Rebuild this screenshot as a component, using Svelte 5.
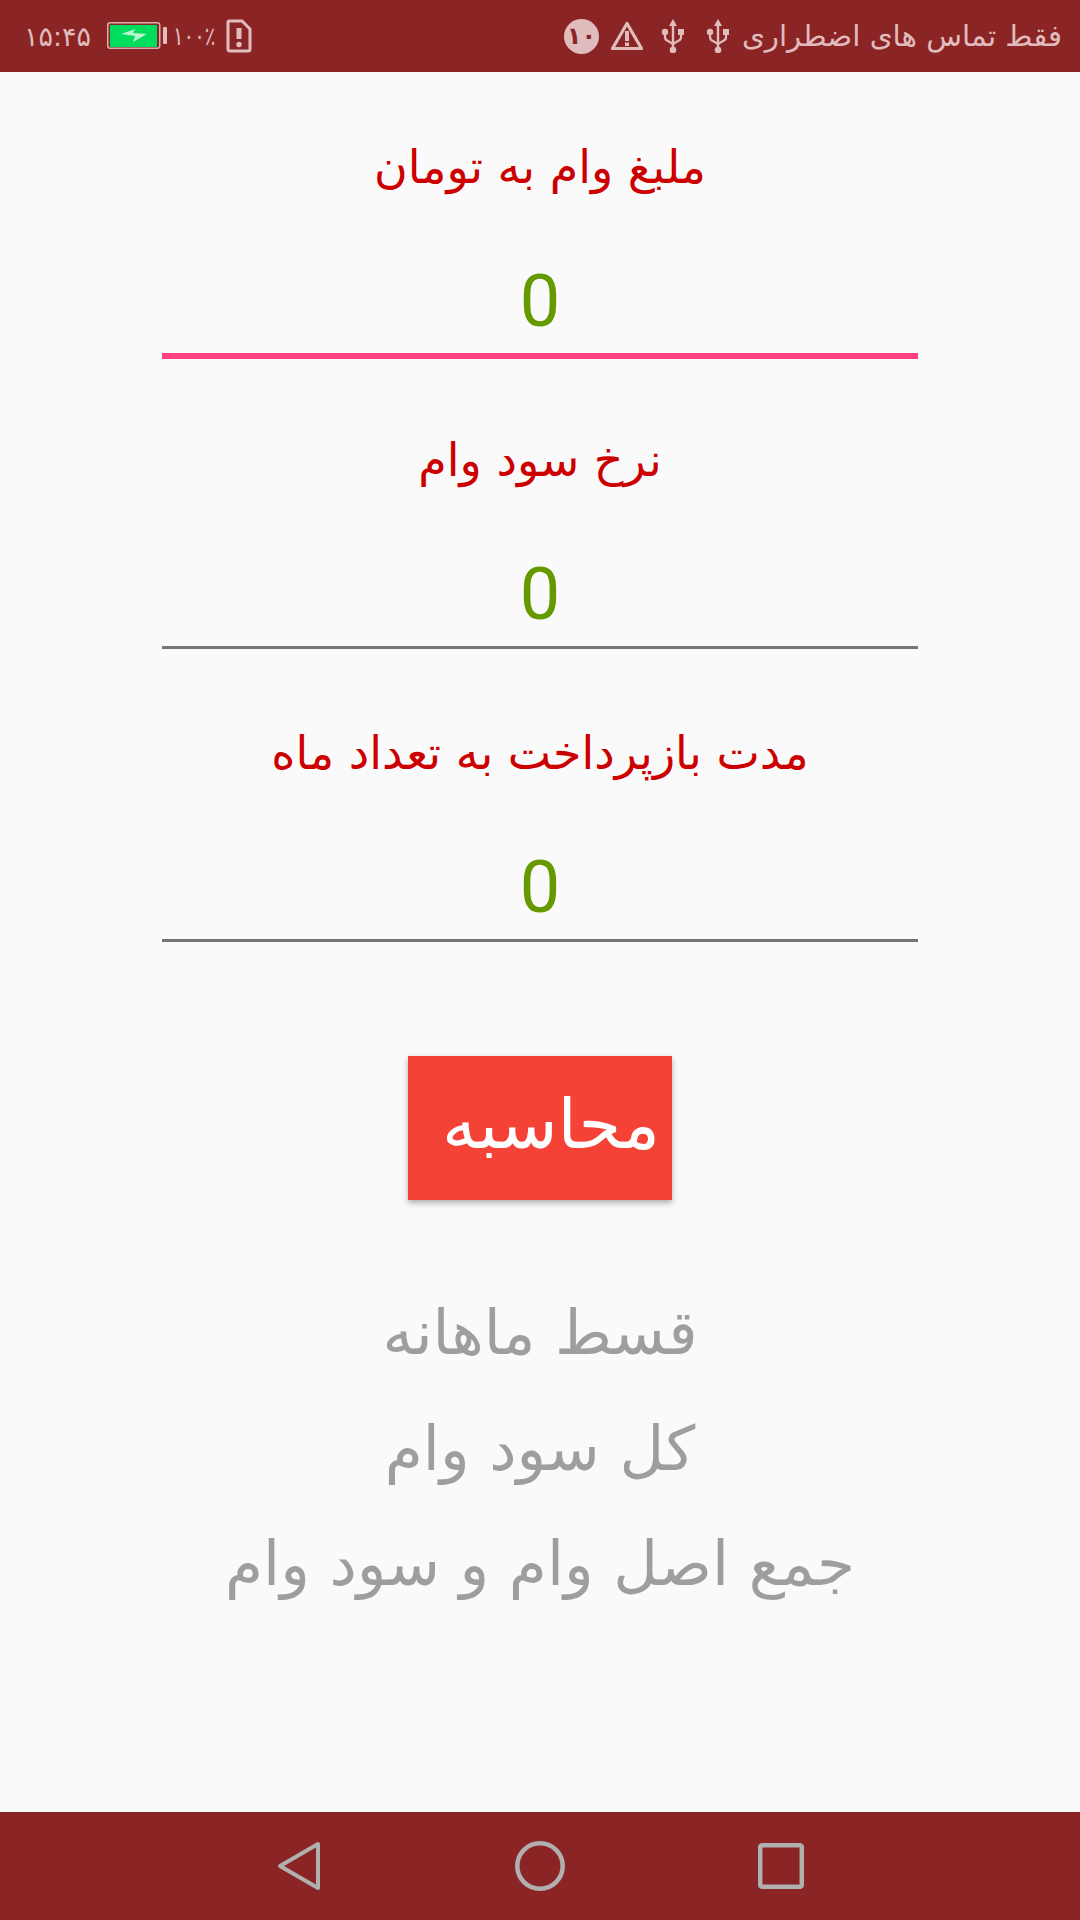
<script>
  const fields = [
    { label: "ملبغ وام به تومان", active: true },
    { label: "نرخ سود وام", active: false },
    { label: "مدت بازپرداخت به تعداد ماه", active: false },
  ];
  const results = ["قسط ماهانه", "کل سود وام", "جمع اصل وام و سود وام"];
</script>

<div class="screen">
  <header class="status">
    <div class="status-left">
      <span class="time">۱۵:۴۵</span>
      <svg class="battery" viewBox="0 0 60 28" width="60" height="28">
        <rect x="0.75" y="0.75" width="52" height="25.5" rx="2.5" fill="none" stroke="#d9aeae" stroke-width="1.5" />
        <rect x="3" y="3" width="47" height="22" fill="#00dd5c" />
        <path d="M14 12 L28 7 L26 11 L40 12 L26 20 L28 14 Z" fill="#b9f5cf" />
        <rect x="56" y="5" width="4" height="17" rx="1" fill="#e0bcbc" />
      </svg>
      <span class="percent">۱۰۰٪</span>
      <svg class="sim" viewBox="0 0 26 34" width="26" height="34">
        <path d="M3 2 H16 L24 10 V30 Q24 32 22 32 H4 Q2 32 2 30 V3 Q2 2 3 2 Z" fill="none" stroke="#e0bcbc" stroke-width="3" />
        <rect x="10.5" y="9" width="5" height="11" fill="#e0bcbc" />
        <circle cx="13" cy="25.5" r="2.7" fill="#e0bcbc" />
      </svg>
    </div>
    <div class="status-right">
      <span class="badge">۱۰</span>
      <svg viewBox="0 0 34 32" width="34" height="32" class="warn">
        <path d="M17 3.5 L31.5 28.5 H2.5 Z" fill="none" stroke="#e0bcbc" stroke-width="3.2" stroke-linejoin="round" />
        <rect x="15" y="11" width="4" height="10" fill="#e0bcbc" />
        <rect x="15" y="22.5" width="4" height="3.5" fill="#e0bcbc" />
      </svg>
      {#each [0, 1] as i (i)}
        <svg viewBox="0 0 24 34" width="24" height="34" class="usb">
          <path d="M12 0 L16 7 H13.2 V30 H10.8 V7 H8 Z" fill="#e0bcbc" />
          <circle cx="12" cy="31" r="3.3" fill="#e0bcbc" />
          <circle cx="4" cy="13" r="3.2" fill="#e0bcbc" />
          <rect x="17" y="10" width="6" height="6" fill="#e0bcbc" />
          <path d="M4 15 V18 Q4 21 7 22 L12 25 L17 22 Q20 21 20 18 V15" fill="none" stroke="#e0bcbc" stroke-width="2.2" />
        </svg>
      {/each}
      <span class="carrier">فقط تماس های اضطراری</span>
    </div>
  </header>

  <main class="content">
    {#each fields as field}
      <section class="field">
        <h2 class="label">{field.label}</h2>
        <div class="value" class:active={field.active}>0</div>
      </section>
    {/each}

    <button class="calc">محاسبه</button>

    <div class="results">
      {#each results as line}
        <p class="result">{line}</p>
      {/each}
    </div>
  </main>

  <nav class="nav">
    <div class="nav-item">
      <svg viewBox="0 0 44 50" width="44" height="50">
        <path d="M41 3 L3 25 L41 47 Z" fill="none" stroke="#b0b0b0" stroke-width="4" stroke-linejoin="round" />
      </svg>
    </div>
    <div class="nav-item">
      <svg viewBox="0 0 50 50" width="50" height="50">
        <circle cx="25" cy="25" r="22.7" fill="none" stroke="#b0b0b0" stroke-width="4.5" />
      </svg>
    </div>
    <div class="nav-item">
      <svg viewBox="0 0 46 46" width="46" height="46">
        <rect x="2.2" y="2.2" width="41.6" height="41.6" rx="2" fill="none" stroke="#b0b0b0" stroke-width="4.5" />
      </svg>
    </div>
  </nav>
</div>

<style>
  :global(body) {
    margin: 0;
    background: #fafafa;
  }
  .screen {
    width: 1080px;
    height: 1920px;
    display: flex;
    flex-direction: column;
    background: #fafafa;
    font-family: "DejaVu Sans", sans-serif;
  }
  .status {
    height: 72px;
    background: #8b2525;
    color: #e0bcbc;
    display: flex;
    align-items: center;
    justify-content: space-between;
    padding: 0 18px 0 24px;
  }
  .status-left,
  .status-right {
    display: flex;
    align-items: center;
  }
  .time {
    font-size: 27px;
    width: 83px;
  }
  .percent {
    width: 46px;
    font-size: 26px;
    white-space: nowrap;
    transform: scaleX(0.76);
    transform-origin: left center;
    margin: 0 7px 0 6px;
  }
  .badge {
    width: 35px;
    height: 35px;
    border-radius: 50%;
    background: #e0bcbc;
    color: #8b2525;
    font-size: 24px;
    font-weight: bold;
    display: flex;
    align-items: center;
    justify-content: center;
  }
  .warn {
    margin: 0 17px 0 11px;
  }
  .usb {
    margin-right: 21px;
  }
  .usb:last-of-type {
    margin-right: 12px;
  }
  .carrier {
    font-size: 29.3px;
    direction: rtl;
  }
  .content {
    flex: 1;
    display: flex;
    flex-direction: column;
    align-items: center;
    padding-top: 72px;
  }
  .field {
    width: 756px;
  }
  .label {
    margin: 0;
    height: 50px;
    line-height: 46px;
    font-size: 46px;
    font-weight: normal;
    text-align: center;
    color: #cc0000;
    direction: rtl;
  }
  .value {
    margin: 63px 0 81px;
    padding-bottom: 6px;
    line-height: 90px;
    font-family: Roboto, sans-serif;
    font-size: 72px;
    text-align: center;
    color: #669900;
    border-bottom: 3px solid #757575;
  }
  .value.active {
    border-bottom: 6px solid #ff4081;
    margin-bottom: 78px;
  }
  .calc {
    margin-top: 33px;
    width: 264px;
    height: 144px;
    border: none;
    padding: 0 0 8px 22px;
    background: #f44336;
    color: #fff;
    font-family: inherit;
    font-size: 69px;
    box-shadow: 0 3px 6px rgba(0, 0, 0, 0.3);
  }
  .results {
    margin-top: 75px;
    display: flex;
    flex-direction: column;
    align-items: center;
  }
  .result {
    margin: 0;
    height: 115.5px;
    line-height: 116px;
    font-size: 61.5px;
    color: #9e9e9e;
    direction: rtl;
  }
  .nav {
    height: 108px;
    background: #8b2525;
    display: flex;
    justify-content: center;
  }
  .nav-item {
    width: 241px;
    display: flex;
    align-items: center;
    justify-content: center;
  }
</style>
